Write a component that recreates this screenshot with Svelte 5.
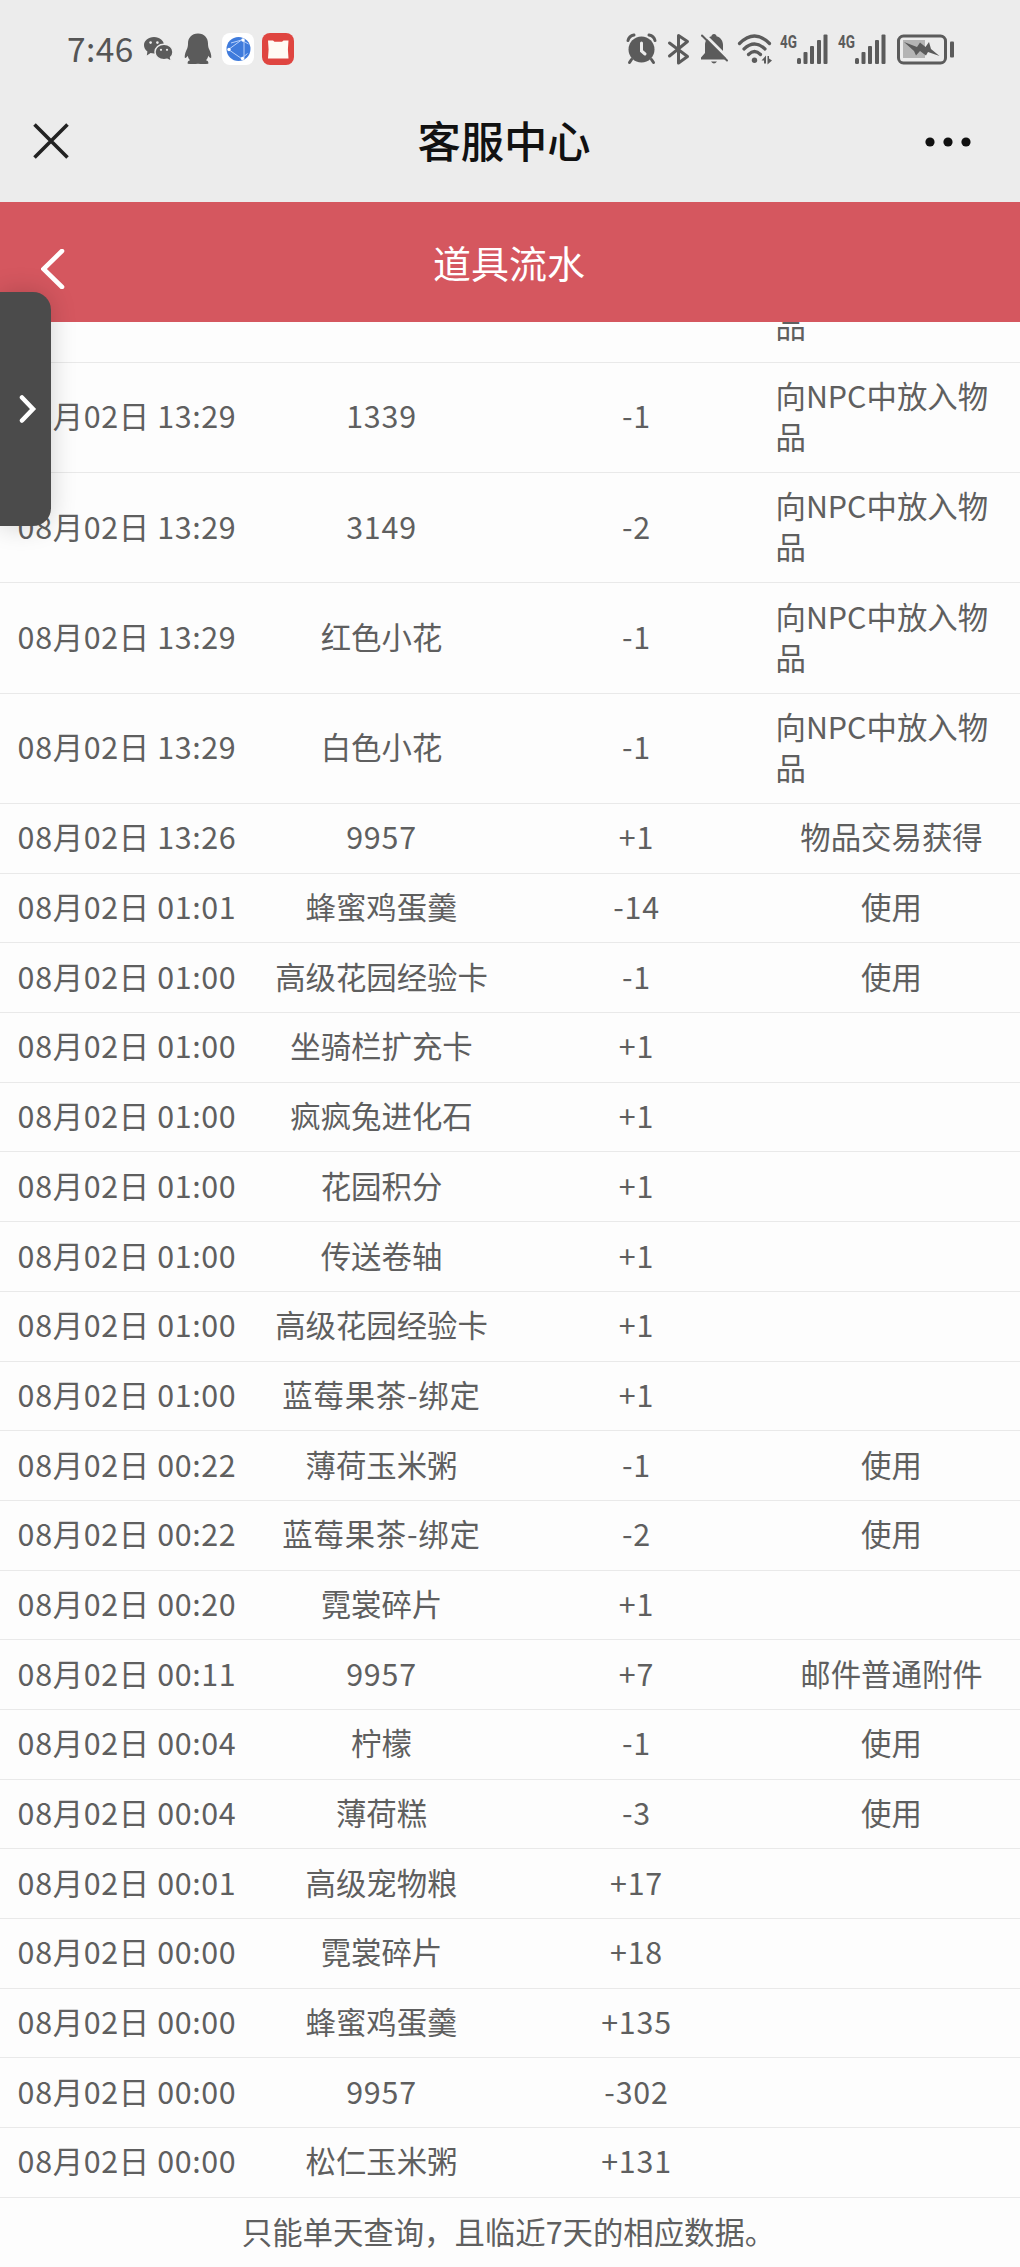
<script lang="ts">
    interface LogRow {
        time: string;
        item: string;
        amount: string;
        reason?: string;
    }

    const putIn = "向NPC中放入物品";

    const rows: LogRow[] = [
        { time: "13:29", item: "1339", amount: "-1", reason: putIn },
        { time: "13:29", item: "1339", amount: "-1", reason: putIn },
        { time: "13:29", item: "3149", amount: "-2", reason: putIn },
        { time: "13:29", item: "红色小花", amount: "-1", reason: putIn },
        { time: "13:29", item: "白色小花", amount: "-1", reason: putIn },
        { time: "13:26", item: "9957", amount: "+1", reason: "物品交易获得" },
        { time: "01:01", item: "蜂蜜鸡蛋羹", amount: "-14", reason: "使用" },
        { time: "01:00", item: "高级花园经验卡", amount: "-1", reason: "使用" },
        { time: "01:00", item: "坐骑栏扩充卡", amount: "+1" },
        { time: "01:00", item: "疯疯兔进化石", amount: "+1" },
        { time: "01:00", item: "花园积分", amount: "+1" },
        { time: "01:00", item: "传送卷轴", amount: "+1" },
        { time: "01:00", item: "高级花园经验卡", amount: "+1" },
        { time: "01:00", item: "蓝莓果茶-绑定", amount: "+1" },
        { time: "00:22", item: "薄荷玉米粥", amount: "-1", reason: "使用" },
        { time: "00:22", item: "蓝莓果茶-绑定", amount: "-2", reason: "使用" },
        { time: "00:20", item: "霓裳碎片", amount: "+1" },
        { time: "00:11", item: "9957", amount: "+7", reason: "邮件普通附件" },
        { time: "00:04", item: "柠檬", amount: "-1", reason: "使用" },
        { time: "00:04", item: "薄荷糕", amount: "-3", reason: "使用" },
        { time: "00:01", item: "高级宠物粮", amount: "+17" },
        { time: "00:00", item: "霓裳碎片", amount: "+18" },
        { time: "00:00", item: "蜂蜜鸡蛋羹", amount: "+135" },
        { time: "00:00", item: "9957", amount: "-302" },
        { time: "00:00", item: "松仁玉米粥", amount: "+131" },
    ];
</script>

{#snippet signal()}
    <svg width="50" height="34" viewBox="0 0 50 34">
        <text x="0" y="15.500" textLength="17" lengthAdjust="spacingAndGlyphs">4G</text>
        <rect x="17" y="26" width="4" height="6" rx="1.5" />
        <rect x="23.5" y="20" width="4" height="12" rx="1" />
        <rect x="30" y="14" width="4" height="18" rx="1" />
        <rect x="37" y="8" width="4" height="24" rx="1" />
        <rect x="43.5" y="2.5" width="4" height="29.5" rx="1" />
    </svg>
{/snippet}

<div class="screen">
    <div class="status-bar">
        <span class="clock">7:46</span>
        <div class="icons left">
            <svg width="31" height="34" viewBox="0 0 31 34">
                <path d="M11 5C5.200 5 1 8.700 1 13.300c0 2.500 1.300 4.700 3.400 6.200l-.6 4 3.800-2.400c1.100.3 2.200.5 3.400.5 5.800 0 10-3.800 10-8.300S16.800 5 11 5z" />
                <path class="cut" d="M21 12.300c-5 0-9 3.300-9 7.700s4 7.700 9 7.700c1 0 2.200-.2 3.200-.5l4.200 2.300-.8-4.200c1.500-1.300 2.400-3.200 2.400-5.300 0-4.400-4-7.700-9-7.700z" />
                <g class="hole">
                    <circle cx="7.600" cy="10.600" r="1.300" /><circle cx="14.400" cy="10.600" r="1.300" />
                    <circle cx="18" cy="17.800" r="1.100" /><circle cx="24" cy="17.800" r="1.100" />
                </g>
            </svg>
            <svg width="32" height="34" viewBox="0 0 32 34">
                <path d="M16 1.500C9.500 1.500 6 6 6 11.500c0 2-.2 3.200-.8 5-1.500 3-2.600 6-2.500 9 .7 1.200 2.200-.3 3-1.800.4 1.900 1.100 3.300 2.300 4.600-2 .7-2.600 1.700-2.300 3.500 3 .3 7 .3 10.300 0 3.300.3 7.300.3 10.300 0 .3-1.800-.3-2.800-2.300-3.500 1.200-1.300 1.900-2.700 2.300-4.600.8 1.500 2.300 3 3 1.800.1-3-1-6-2.500-9-.6-1.800-.8-3-.8-5 0-5.500-3.500-10-10-10z" />
            </svg>
            <svg width="32" height="34" viewBox="0 0 32 34">
                <rect x="0" y="1" width="32" height="32" rx="8" fill="#fff" />
                <circle cx="16.500" cy="17" r="12" fill="#3f7bdc" />
                <g fill="none" stroke="#b9d2fb" stroke-width="1">
                    <path d="M6.500 17.500 19.500 8M6.500 17.500l13 9M22 7.500v19M9 11l10.500-3 7 4M19.500 26.500l6-5" />
                </g>
                <g fill="#fff">
                    <circle cx="7" cy="17.500" r="1.700" /><circle cx="21" cy="8" r="1.700" /><circle cx="20.500" cy="26.500" r="1.700" />
                </g>
            </svg>
            <svg width="32" height="34" viewBox="0 0 32 34">
                <rect x="0" y="1" width="32" height="32" rx="8" fill="#df4540" />
                <path d="M6 8.500h5l1.500 1.200H20l1.500-1.200h5l-.6 9 .6 9H6l.6-9z" fill="#fffaf4" />
            </svg>
        </div>
        <div class="icons right">
            <svg width="33" height="34" viewBox="0 0 33 34">
                <circle cx="15.500" cy="17.500" r="13" />
                <path class="line" stroke-width="3" d="M2 8.500Q3 4 8 3M29 8.500Q28 4 23 3M5.500 27.500 3.500 30.500M25.500 27.500l2 3" />
                <path d="M15.500 11v8l3.500 3" fill="none" stroke="#ececec" stroke-width="3" stroke-linecap="round" />
            </svg>
            <svg width="25" height="34" viewBox="0 0 25 34">
                <path class="line" stroke-width="3" stroke-linejoin="round" d="M2.500 11 20.500 24.500 11.500 31V3.500L20.500 9.500 2.500 24" />
            </svg>
            <svg width="28" height="34" viewBox="0 0 28 34">
                <path d="M14 2c-1.500 0-2.500 1-2.500 2.200C7 5.500 5 9 5 13v8l-4 4.500v2h25v-2L23 21v-8c0-4-2-7.500-6.500-8.800C16.500 3 15.500 2 14 2zM11 29.500h6q-3 4-6 0z" />
                <path d="M3.500 1.500 29 27" stroke="#ececec" stroke-width="3" />
                <path class="line" stroke-width="2" d="M2 3.500 27 28.500" />
            </svg>
            <svg width="36" height="34" viewBox="0 0 36 34">
                <path class="line" stroke-width="3.200" d="M3.500 11.500Q18.500-3.500 33.500 11.500M8 17Q18.500 7 29 17M12.500 22.500Q18.500 16.500 24.500 22.500" />
                <circle cx="18.500" cy="28.300" r="2.700" />
                <path d="M25.500 28.500l4.500-5v8h-2v-3zM31.500 24l1.500 0v2.500l3 2-4.500 4z" />
            </svg>
            {@render signal()}
            {@render signal()}
            <svg width="59" height="34" viewBox="0 0 59 34">
                <rect x="7" y="8" width="22" height="18" fill="#b4b4b4" />
                <rect class="line" x="2.500" y="4" width="47" height="27" rx="5" stroke-width="3" />
                <path d="M8 10 21 15 24 10.500 29.500 15 33 10 35 17 43.500 24 32 20 30 23.500 24 19 20 23.500 18 19z" />
                <rect x="54" y="9.500" width="4" height="16" rx="1" />
            </svg>
        </div>
    </div>

    <div class="title-bar">
        <svg class="close" width="36" height="36" viewBox="0 0 36 36">
            <path d="M1.500 1.500 34.500 34.500M34.500 1.500 1.500 34.500" />
        </svg>
        <h1>客服中心</h1>
        <svg class="more" width="46" height="10" viewBox="0 0 46 10">
            <circle cx="5" cy="5" r="4.600" />
            <circle cx="23" cy="5" r="4.600" />
            <circle cx="41" cy="5" r="4.600" />
        </svg>
    </div>

    <header>
        <svg class="back" width="24" height="40" viewBox="0 0 24 40">
            <path d="M21 2 2.500 20 21 38" />
        </svg>
        <h2>道具流水</h2>
    </header>

    <div class="viewport">
        <div class="log">
            {#each rows as row}
                <div class="row">
                    <div class="cell time"><span>08月02日 {row.time}</span></div>
                    <div class="cell" class:spaced={/[\d-]/.test(row.item)}><span>{row.item}</span></div>
                    <div class="cell spaced"><span>{row.amount}</span></div>
                    <div class="cell"><span>{row.reason ?? ""}</span></div>
                </div>
            {/each}
            <p class="hint">只能单天查询，且临近7天的相应数据。</p>
        </div>
    </div>

    <div class="side-tab">
        <svg width="18" height="28" viewBox="0 0 18 28">
            <path d="M3 2.500 14 14 3 25.500" />
        </svg>
    </div>
</div>

<style>
    :global(body) {
        margin: 0;
        background: #fdfdfd;
    }

    .screen {
        position: relative;
        height: 2267px;
        overflow: hidden;
        background: #fdfdfd;
        color: #5f5f5f;
        font-family: "Noto Sans CJK SC", sans-serif;
    }

    .status-bar {
        display: flex;
        align-items: center;
        height: 98px;
        box-sizing: border-box;
        padding: 0 65px 0 67px;
        background: #ececec;
    }

    .clock {
        width: 76px;
        margin-top: -2px;
        color: #555;
        font-size: 33.5px;
        letter-spacing: 0.4px;
        line-height: 34px;
        white-space: nowrap;
    }

    .icons {
        display: flex;
        gap: 8px;
        fill: #5b5b5b;
    }

    .icons.right {
        margin-left: auto;
    }

    .icons svg {
        display: block;
        overflow: visible;
    }

    .icons text {
        font: 700 18px Roboto, sans-serif;
    }

    .line {
        fill: none;
        stroke: #5b5b5b;
        stroke-linecap: round;
    }

    .cut {
        stroke: #ececec;
        stroke-width: 1.5;
    }

    .hole {
        fill: #ececec;
    }

    .title-bar {
        display: grid;
        grid-template-columns: 100px 1fr 112px;
        align-items: center;
        height: 104px;
        background: #ececec;
    }

    h1,
    h2 {
        margin: 0;
        text-align: center;
    }

    h1 {
        margin-top: -23px;
        color: #111;
        font-size: 43.3px;
        font-weight: 500;
        line-height: 60px;
    }

    .close {
        margin: -18px 0 0 33px;
        fill: none;
        stroke: #222;
        stroke-width: 3.6;
    }

    .more {
        margin: -17px 0 0 17px;
        fill: #111;
    }

    header {
        display: grid;
        grid-template-columns: 100px 1fr 100px;
        align-items: center;
        height: 120px;
        background: #d5575f;
    }

    header h2 {
        margin-right: 2px;
        color: #fff;
        font-size: 38px;
        font-weight: 400;
        line-height: 50px;
    }

    .back {
        margin: 14px 0 0 41px;
        fill: none;
        stroke: #fff;
        stroke-width: 4.6;
        stroke-linecap: round;
    }

    .viewport {
        height: 1945px;
        overflow: hidden;
    }

    /* scrolled position, only the tail of the first row is visible */
    .log {
        margin-top: -69.7px;
        font-size: 30.4px;
        line-height: 41px;
    }

    .row {
        display: grid;
        grid-template-columns: repeat(4, 1fr);
        box-sizing: border-box;
        height: 69.69px;
        padding: 12px 0 15px;
        border-bottom: 1.5px solid #e9e9e9;
    }

    .row:nth-child(-n + 5) {
        height: 110.35px;
    }

    .row:first-child .cell:not(:last-child) {
        visibility: hidden;
    }

    .cell {
        display: flex;
        align-items: center;
        justify-content: center;
        padding: 0 12.5px 0 10.5px;
    }

    .time {
        padding: 0 1px 0 0;
        letter-spacing: 0.65px;
        white-space: nowrap;
    }

    .spaced {
        letter-spacing: 0.8px;
    }

    .hint {
        margin: 0;
        padding: 13px 0 15px;
        text-align: center;
        text-indent: -3px;
        border-bottom: 1px solid #ebebeb;
    }

    .side-tab {
        position: absolute;
        top: 292px;
        left: 0;
        display: flex;
        align-items: center;
        justify-content: flex-end;
        box-sizing: border-box;
        width: 51px;
        height: 234px;
        padding-right: 14px;
        background: #4b4b4b;
        border-radius: 0 18px 18px 0;
        box-shadow: 0 0 26px rgba(0, 0, 0, 0.18);
    }

    .side-tab path {
        fill: none;
        stroke: #fff;
        stroke-width: 4.5;
        stroke-linecap: round;
    }
</style>
